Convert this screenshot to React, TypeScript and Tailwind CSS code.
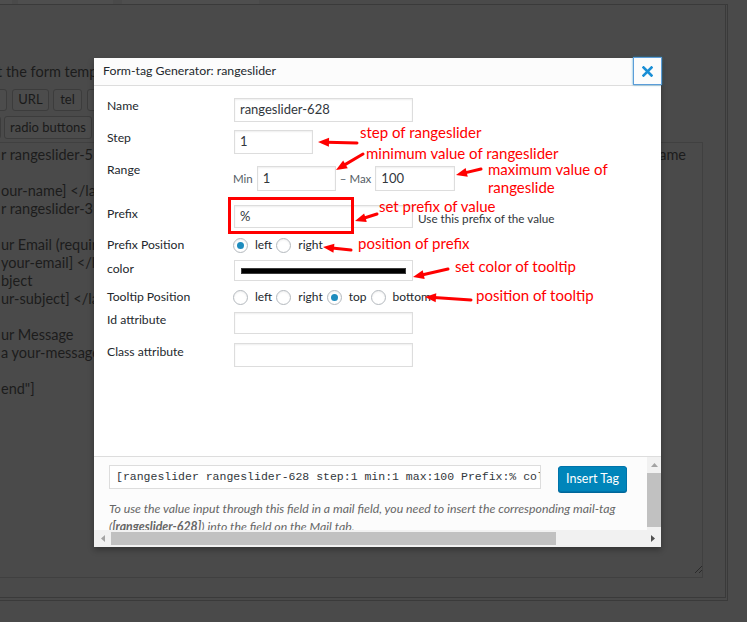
import React from "react";

function Arrow({ x1, y1, x2, y2 }: { x1: number; y1: number; x2: number; y2: number }) {
  const dx = x2 - x1;
  const dy = y2 - y1;
  const len = Math.hypot(dx, dy);
  const ux = dx / len;
  const uy = dy / len;
  const px = -uy;
  const py = ux;
  const hl = 11;
  const hw = 4.5;
  const bx = x2 - ux * hl;
  const by = y2 - uy * hl;
  return (
    <g>
      <line x1={x1} y1={y1} x2={bx + ux * 2} y2={by + uy * 2} stroke="#ff0000" strokeWidth={3} strokeLinecap="round" />
      <polygon points={`${x2},${y2} ${bx + px * hw},${by + py * hw} ${bx - px * hw},${by - py * hw}`} fill="#ff0000" />
    </g>
  );
}

function Radio({ checked }: { checked?: boolean }) {
  return (
    <span className="flex h-[15px] w-[15px] shrink-0 items-center justify-center rounded-full border border-[#b4b9be] bg-white shadow-[inset_0_1px_2px_rgba(0,0,0,0.07)]">
      {checked && <span className="h-[7px] w-[7px] rounded-full bg-[#1e8cbe]" />}
    </span>
  );
}

function RadioOpt({ label, checked }: { label: string; checked?: boolean }) {
  return (
    <span className="flex items-center">
      <Radio checked={checked} />
      <span className="ml-[7px] text-[12px]">{label}</span>
    </span>
  );
}

function BgButton({ label, w, ml }: { label: string; w: string; ml: string }) {
  return (
    <div
      className={`${w} ${ml} flex h-full shrink-0 items-center justify-center overflow-hidden whitespace-nowrap rounded-[3px] border border-[#3c3c3c] bg-[#4c4c4c] text-[13px] text-[#1a1a1a]`}
    >
      {label}
    </div>
  );
}

const lines = [
  "",
  "",
  "our-name] </label>",
  "r rangeslider-3",
  "",
  "ur Email (required)",
  "your-email] </label>",
  "bject",
  "ur-subject] </label>",
  "",
  "ur Message",
  "a your-message] </label>",
  "",
  'end"]',
];

const ann = "absolute text-[15px] leading-[18px] whitespace-nowrap text-[#ff0000]";

export default function App() {
  return (
    <div className="relative h-[622px] w-[747px] overflow-hidden bg-[#4a4a4a] font-['Lato',sans-serif]">
      {/* top strip (tabs) */}
      <div className="flex h-[4px]">
        <div className="w-[12px] bg-[#4e4e4e]" />
        <div className="ml-[6px] w-[95px] bg-[#4e4e4e]" />
        <div className="ml-[9px] w-[137px] bg-[#4e4e4e]" />
      </div>

      {/* background panel */}
      <div className="ml-[-10px] h-[597px] w-[738px] border-t border-r border-b border-[#3a3a3a] pr-[1px] pb-[2px]">
        <div className="flex h-full flex-col border-r border-b border-[#3a3a3a]">
          <div className="mt-[58px] pl-[7px] text-[14.5px] leading-[18px] whitespace-nowrap text-[#1c1c1c]">
            t the form template here. For details, see Editing form template.
          </div>
          <div className="mt-[8px] flex h-[22px]">
            <BgButton label="email" w="w-[45px]" ml="ml-[-28px]" />
            <BgButton label="URL" w="w-[37px]" ml="ml-[5px]" />
            <BgButton label="tel" w="w-[29px]" ml="ml-[4px]" />
            <BgButton label="number" w="w-[58px]" ml="ml-[5px]" />
            <BgButton label="date" w="w-[40px]" ml="ml-[4px]" />
          </div>
          <div className="mt-[5px] flex h-[23px]">
            <BgButton label="checkboxes" w="w-[72px]" ml="ml-[-61px]" />
            <BgButton label="radio buttons" w="w-[88px]" ml="ml-[3px]" />
            <BgButton label="acceptance" w="w-[72px]" ml="ml-[4px]" />
          </div>
          <div className="relative mt-[3px] h-[436px] w-[713px] border border-[#404040] pt-[3px] pl-[10px] text-[14.5px] leading-[18px] whitespace-nowrap text-[#1c1c1c]">
            <div className="flex h-[18px] justify-between pr-[16px]">
              <span>r rangeslider-5</span>
              <span>name</span>
            </div>
            {lines.slice(1).map((l, i) => (
              <div key={i} className="h-[18px]">
                {l}
              </div>
            ))}
            <svg className="absolute right-[-1px] bottom-[3px]" width="9" height="9" viewBox="0 0 9 9">
              <line x1="1" y1="8" x2="8" y2="1" stroke="#2a2a2a" strokeWidth="1" />
              <line x1="5" y1="8" x2="8" y2="5" stroke="#2a2a2a" strokeWidth="1" />
            </svg>
          </div>
        </div>
      </div>

      {/* modal */}
      <div className="absolute top-[58px] left-[94px] flex h-[489px] w-[567px] flex-col bg-white shadow-[0_3px_6px_rgba(0,0,0,0.3)]">
        <div className="flex h-[28px] shrink-0 items-center border-b border-[#dddddd] bg-[#fcfcfc]">
          <div className="flex-1 pl-[9px] text-[12.3px] text-[#23282d]">Form-tag Generator: rangeslider</div>
          <div className="mt-[-1px] mr-[-1px] flex h-[28px] w-[29px] items-center justify-center border border-[#5b9dd9] bg-[#fcfcfc] shadow-[0_0_2px_rgba(30,140,190,0.8)]">
            <svg width="11" height="11" viewBox="0 0 11 11">
              <path d="M1.5 1.5 L9.5 9.5 M9.5 1.5 L1.5 9.5" stroke="#1a8fd6" strokeWidth="2.6" strokeLinecap="square" />
            </svg>
          </div>
        </div>

        <div className="flex-1 pt-[12px] pl-[13px] text-[12.2px] text-[#23282d]">
          {/* Name */}
          <div className="flex">
            <div className="w-[127px] shrink-0 leading-4">Name</div>
            <div className="flex h-[24px] w-[179px] items-center border border-[#dddddd] pl-[5px] text-[13px] text-[#32373c] shadow-[inset_0_1px_2px_rgba(0,0,0,0.07)]">
              rangeslider-628
            </div>
          </div>
          {/* Step */}
          <div className="mt-[8px] flex">
            <div className="w-[127px] shrink-0 leading-4">Step</div>
            <div className="flex h-[24px] w-[79px] items-center border border-[#dddddd] pl-[5px] text-[13px] text-[#32373c] shadow-[inset_0_1px_2px_rgba(0,0,0,0.07)]">
              1
            </div>
          </div>
          {/* Range */}
          <div className="mt-[8px] flex">
            <div className="w-[127px] shrink-0 leading-4">Range</div>
            <div className="flex items-center pt-[4px] text-[11.5px] text-[#555d66]">
              <span className="ml-[-1px]">Min</span>
              <div className="ml-[4px] flex h-[25px] w-[79px] items-center border border-[#dddddd] pl-[5px] text-[13px] text-[#32373c] shadow-[inset_0_1px_2px_rgba(0,0,0,0.07)]">
                1
              </div>
              <span className="ml-[4px]">– Max</span>
              <div className="ml-[4px] flex h-[25px] w-[80px] items-center border border-[#dddddd] pl-[5px] text-[13px] text-[#32373c] shadow-[inset_0_1px_2px_rgba(0,0,0,0.07)]">
                100
              </div>
            </div>
          </div>
          {/* Prefix */}
          <div className="mt-[14px] flex">
            <div className="w-[127px] shrink-0 pt-[1px] leading-4">Prefix</div>
            <div className="flex items-center">
              <div className="flex h-[23px] w-[179px] items-center border border-[#dddddd] pl-[5px] text-[13px] text-[#32373c] shadow-[inset_0_1px_2px_rgba(0,0,0,0.07)]">
                %
              </div>
              <span className="mt-[4px] ml-[5px] text-[11.7px] text-[#32373c]">Use this prefix of the value</span>
            </div>
          </div>
          {/* Prefix Position */}
          <div className="mt-[9px] flex h-[16px] items-center">
            <div className="w-[127px] shrink-0 leading-4">Prefix Position</div>
            <div className="ml-[-1px] flex items-center gap-[4px]">
              <RadioOpt label="left" checked />
              <RadioOpt label="right" />
            </div>
          </div>
          {/* color */}
          <div className="mt-[7px] flex">
            <div className="w-[127px] shrink-0 pt-[1px] leading-4">color</div>
            <div className="flex h-[21px] w-[179px] items-center border border-[#dddddd] px-[6px]">
              <div className="h-[6px] w-full border border-[#3a3a3a] bg-black" />
            </div>
          </div>
          {/* Tooltip Position */}
          <div className="mt-[8px] flex h-[16px] items-center">
            <div className="w-[127px] shrink-0 leading-4">Tooltip Position</div>
            <div className="ml-[-1px] flex items-center gap-[4px]">
              <RadioOpt label="left" />
              <RadioOpt label="right" />
              <RadioOpt label="top" checked />
              <RadioOpt label="bottom" />
            </div>
          </div>
          {/* Id attribute */}
          <div className="mt-[7px] flex">
            <div className="w-[127px] shrink-0 leading-4">Id attribute</div>
            <div className="h-[22px] w-[179px] border border-[#dddddd] shadow-[inset_0_1px_2px_rgba(0,0,0,0.07)]" />
          </div>
          {/* Class attribute */}
          <div className="mt-[9px] flex">
            <div className="w-[127px] shrink-0 pt-[1px] leading-4">Class attribute</div>
            <div className="h-[24px] w-[179px] border border-[#dddddd] shadow-[inset_0_1px_2px_rgba(0,0,0,0.07)]" />
          </div>
        </div>

        {/* footer */}
        <div className="flex h-[91px] shrink-0 flex-col border-t border-[#dddddd]">
          <div className="flex h-[73px]">
            <div className="flex-1 overflow-hidden bg-[#fcfcfc] pt-[8px] pl-[15px]">
              <div className="flex">
                <div className="flex h-[24px] w-[432px] items-center overflow-hidden border border-[#dddddd] bg-white pl-[6px] font-['Liberation_Mono',monospace] text-[11.5px] whitespace-nowrap text-[#32373c]">
                  [rangeslider rangeslider-628 step:1 min:1 max:100 Prefix:% color:#000000]
                </div>
                <div className="mt-[1px] ml-[17px] flex h-[26px] w-[69px] items-center justify-center rounded-[3px] border border-[#0073aa] bg-[#0085ba] text-[12.5px] text-white shadow-[0_1px_0_#006799]">
                  Insert Tag
                </div>
              </div>
              <div className="mt-[8px] text-[12.3px] leading-[18px] whitespace-nowrap text-[#666666] italic">
                <div>To use the value input through this field in a mail field, you need to insert the corresponding mail-tag</div>
                <div>
                  (<strong>[rangeslider-628]</strong>) into the field on the Mail tab.
                </div>
              </div>
            </div>
            <div className="flex w-[14px] flex-col bg-[#f1f1f1]">
              <div className="flex h-[16px] items-center justify-center">
                <svg width="7" height="4" viewBox="0 0 7 4">
                  <polygon points="3.5,0 7,4 0,4" fill="#a3a3a3" />
                </svg>
              </div>
              <div className="h-[54px] bg-[#c1c1c1]" />
            </div>
          </div>
          <div className="flex h-[17px] items-center bg-[#f1f1f1]">
            <div className="flex w-[17px] items-center justify-center">
              <svg width="4" height="7" viewBox="0 0 4 7">
                <polygon points="0,3.5 4,0 4,7" fill="#a3a3a3" />
              </svg>
            </div>
            <div className="h-[13px] w-[445px] bg-[#c1c1c1]" />
            <div className="flex-1" />
            <div className="flex w-[17px] items-center justify-center">
              <svg width="4" height="7" viewBox="0 0 4 7">
                <polygon points="4,3.5 0,0 0,7" fill="#505050" />
              </svg>
            </div>
          </div>
        </div>
      </div>

      {/* annotations */}
      <svg className="pointer-events-none absolute top-0 left-0" width="747" height="622" viewBox="0 0 747 622">
        <rect x="229.5" y="198.5" width="123" height="34" fill="none" stroke="#ff0000" strokeWidth="3" />
        <Arrow x1={357} y1={143} x2={318} y2={142} />
        <Arrow x1={363} y1={154} x2={336} y2={170} />
        <Arrow x1={481} y1={169} x2={456} y2={175} />
        <Arrow x1={377} y1={214} x2={355} y2={221} />
        <Arrow x1={351} y1={250} x2={323} y2={247} />
        <Arrow x1={448} y1={269} x2={413} y2={277} />
        <Arrow x1={471} y1={300} x2={425} y2={297} />
      </svg>
      <span className={`${ann} top-[123px] left-[360px]`}>step of rangeslider</span>
      <span className={`${ann} top-[144px] left-[366px]`}>minimum value of rangeslider</span>
      <span className={`${ann} top-[160px] left-[488px]`}>
        maximum value of
        <br />
        rangeslide
      </span>
      <span className={`${ann} top-[197px] left-[379px]`}>set prefix of value</span>
      <span className={`${ann} top-[234px] left-[358px]`}>position of prefix</span>
      <span className={`${ann} top-[257px] left-[455px]`}>set color of tooltip</span>
      <span className={`${ann} top-[286px] left-[476px]`}>position of tooltip</span>
    </div>
  );
}
